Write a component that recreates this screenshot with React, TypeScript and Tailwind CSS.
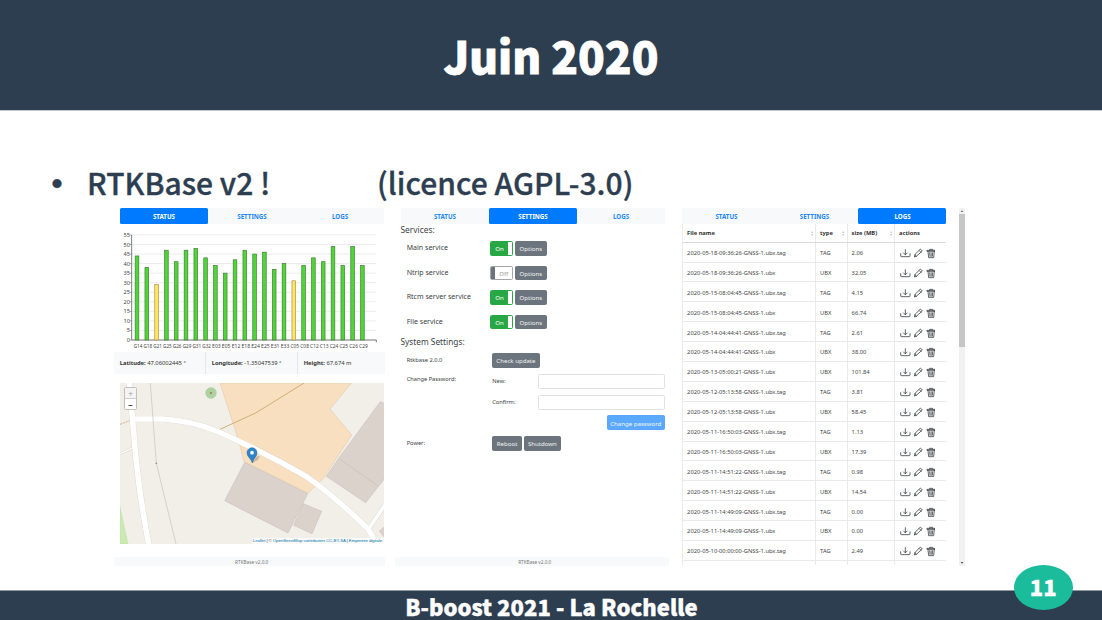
import React from 'react';

const slideFont = "font-['Noto_Sans_CJK_SC','Noto_Sans_CJK_JP',sans-serif]";

const tabs = ['STATUS', 'SETTINGS', 'LOGS'];

function Nav({ active }: { active: number }) {
  return (
    <nav className="flex h-[15.5px] w-[264px] shrink-0 bg-[#f8f9fa]">
      {tabs.map((t, i) => (
        <div
          key={t}
          className={
            'flex w-[88px] items-center justify-center rounded-[1.5px] pt-[1.5px] text-[6.2px] font-bold ' +
            (i === active ? 'bg-[#007bff] text-white' : 'text-[#1b86fb]')
          }
        >
          {t}
        </div>
      ))}
    </nav>
  );
}

const sats: [string, number][] = [
  ['G14', 44], ['G18', 38], ['G21', 29], ['G25', 47], ['G26', 41], ['G29', 47], ['G31', 48], ['G32', 43],
  ['E03', 39], ['E05', 35], ['E12', 42], ['E18', 47], ['E24', 45], ['E25', 46], ['E31', 37], ['E33', 40],
  ['C05', 31], ['C08', 39], ['C12', 43], ['C13', 41], ['C24', 49], ['C25', 39], ['C26', 49], ['C29', 39],
];

function Chart() {
  const y = (v: number) => 420 - v * 5.73;
  return (
    <svg viewBox="0 75 840 375" className="h-[125px] w-[280px] shrink-0">
      {Array.from({ length: 12 }, (_, i) => i * 5).map((v) => (
        <g key={v}>
          <line x1="65" x2="799" y1={y(v)} y2={y(v)} stroke="#e3e3e3" strokeWidth="2" />
          <line x1="59" x2="65" y1={y(v)} y2={y(v)} stroke="#777" strokeWidth="2" />
          <text x="60" y={y(v) + 6} fontSize="17" fill="#444" textAnchor="end">{v}</text>
        </g>
      ))}
      <path d="M65 105V420H799V427" fill="none" stroke="#666" strokeWidth="2.5" />
      {sats.map(([n, v], i) => {
        const x = 81 + i * 29.4;
        return (
          <g key={n}>
            <rect
              x={x - 5.5}
              y={y(v)}
              width="11"
              height={420 - y(v)}
              fill={v < 35 ? '#ffe562' : '#4fd636'}
              stroke={v < 35 ? '#a8924a' : '#3f7d38'}
              strokeWidth="2"
            />
            <text x={x + 3} y="444" fontSize="15" fill="#444" textAnchor="middle" textLength="26" lengthAdjust="spacingAndGlyphs">
              {n}
            </text>
          </g>
        );
      })}
    </svg>
  );
}

function Map() {
  return (
    <div className="relative h-[161px] w-[264px]">
      <svg viewBox="30 24 792 483" className="block h-full w-full">
        <rect x="30" y="24" width="792" height="483" fill="#f2efe9" />
        <path d="M330 24H724L660 102L725 180L640 310L594 355L402 260L384 190Z" fill="#f7dfc0" stroke="#e4cbb0" strokeWidth="2" />
        <path d="M30 395L54 507H30Z" fill="#c9ebb0" stroke="#b4d3a0" strokeWidth="1" />
        <path d="M30 236L70 217" stroke="#d8d5d0" strokeWidth="7" />
        <path d="M30 236L70 217" stroke="#fff" strokeWidth="4" />
        <path d="M30 148L62 136" stroke="#c9a46c" strokeWidth="2.5" strokeDasharray="6 3" />
        <path d="M330 163L437 114L582 24" fill="none" stroke="#d0ae76" strokeWidth="3" />
        <g fill="none" strokeLinejoin="round">
          <g stroke="#d9d4cc">
            <path d="M57 18L71 170Q82 330 117 512" strokeWidth="19" />
            <path d="M66 132H155Q250 138 325 170Q470 235 590 305Q670 360 775 463L802 512" strokeWidth="18" />
            <path d="M775 463L826 388" strokeWidth="13" />
          </g>
          <g stroke="#fff">
            <path d="M57 18L71 170Q82 330 117 512" strokeWidth="17" />
            <path d="M66 132H155Q250 138 325 170Q470 235 590 305Q670 360 775 463L802 512" strokeWidth="16.5" />
            <path d="M775 463L826 388" strokeWidth="11" />
          </g>
        </g>
        <path d="M121 24L139 265L198 507" fill="none" stroke="#c4c1bb" strokeWidth="2" />
        <circle cx="139" cy="265" r="2.5" fill="#888" />
        <g fill="#dbd2cc" stroke="#c5b9b1" strokeWidth="1.5">
          <path d="M404 262L593 356L534 474L344 377Z" />
          <path d="M580 386L635 409L606 476L551 451Z" />
          <path d="M811 80L824 86V310L767 383L649 304L686 250Z" />
          <path d="M686 250L804 333" fill="none" />
          <path d="M824 455L808 468L824 488Z" />
        </g>
        <circle cx="303" cy="54" r="17" fill="#add1a0" />
        <circle cx="303" cy="54" r="3" fill="#a5733a" />
        <path d="M428 263L440 245L450 243L443 255Z" fill="#6d6250" opacity=".35" />
        <path d="M427 264C423 250 411 245 411 233A15 15 0 0 1 441 233C441 245 431 250 427 264Z" fill="#2f83c7" stroke="#2769a5" strokeWidth="1.5" />
        <circle cx="426" cy="233" r="5.5" fill="#fff" />
      </svg>
      <div className="absolute left-[4px] top-[4px] h-[23.5px] w-[13px] rounded-[1.5px] border border-[#c2c0bb] bg-white text-center text-[8px] font-bold leading-[11px] text-[#333]">
        <div className="h-[11px] border-b border-[#ccc] bg-[#f4f4f4] text-[#bbb]">+</div>
        <div className="h-[11px]">−</div>
      </div>
      <div className="absolute bottom-0 right-0 h-[6px] whitespace-nowrap bg-white/70 pl-[1px] pr-[2px] font-['Liberation_Sans',sans-serif] text-[4.35px] leading-[6px] tracking-[-0.09px] text-[#0078a8]">
        Leaflet <span className="text-[#333]">| ©</span> OpenStreetMap contributors CC-BY-SA <span className="text-[#333]">|</span> Empreinte digitale
      </div>
    </div>
  );
}

function PanelFooter() {
  return (
    <div className="flex h-[9px] items-center justify-center bg-[#f8f9fa] pl-[5px] pt-[2px] text-[4.7px] leading-none text-[#777]">RTKBase v2.0.0</div>
  );
}

function Info({ label, value }: { label: string; value: string }) {
  return (
    <div className="flex w-[92px] items-center gap-[1.5px] whitespace-nowrap border-r border-[#e5e6e8] pl-[6px] pt-[1px] text-[5.8px] text-[#333] last:w-auto last:border-0">
      <b>{label}</b>
      <span>{value}</span>
    </div>
  );
}

function StatusPanel() {
  return (
    <section className="flex w-[271px] flex-col">
      <div className="pl-[6.3px]"><Nav active={0} /></div>
      <div className="-ml-[4px] mt-[1.3px] h-[127px]"><Chart /></div>
      <div className="flex h-[22px] shrink-0 bg-[#f8f9fa]">
        <Info label="Latitude:" value="47.06002445 °" />
        <Info label="Longitude:" value="-1.35047539 °" />
        <Info label="Height:" value="67.674 m" />
      </div>
      <div className="mt-[9px] pl-[6.3px]"><Map /></div>
      <div className="mt-auto"><PanelFooter /></div>
    </section>
  );
}

const buttonTones = {
  gray: 'border-[#6c757d] bg-[#6c757d]',
  blue: 'border-[#59a5fb] bg-[#5ba9ff]',
};

function Button({ children, tone = 'gray' }: { children: React.ReactNode; tone?: 'gray' | 'blue' }) {
  return (
    <div className={'flex h-[14.7px] items-center justify-center whitespace-nowrap rounded-[1.5px] border pt-[1px] text-[6.1px] text-[#f3f4f5] ' + buttonTones[tone]}>
      {children}
    </div>
  );
}

function Toggle({ on }: { on: boolean }) {
  return on ? (
    <div className="flex h-[14.7px] w-[23.6px] overflow-hidden rounded-[1.5px] border border-[#28a745] bg-white text-[6.1px] text-white">
      <div className="flex w-[17.6px] items-center justify-center bg-[#28a745] pt-[1px]">On</div>
    </div>
  ) : (
    <div className="flex h-[14.7px] w-[23.6px] overflow-hidden rounded-[1.5px] border border-[#a2a6aa] bg-white text-[6.1px] text-[#999]">
      <div className="w-[4.5px] bg-[#6c757d]" />
      <div className="flex flex-1 items-center justify-center pt-[1px]">Off</div>
    </div>
  );
}

const services: [string, boolean][] = [
  ['Main service', true], ['Ntrip service', false], ['Rtcm server service', true], ['File service', true],
];

function SettingsPanel() {
  return (
    <section className="flex w-[274.5px] flex-col text-[#3a3f44]">
      <div className="pl-[6px]"><Nav active={1} /></div>
      <h2 className="mt-[1px] h-[10px] pl-[5.500px] text-[8.4px] leading-[10px]">Services:</h2>
      <div className="mt-[6.5px]">
        {services.map(([name, on]) => (
          <div key={name} className="flex h-[24.5px] items-start pl-[11.700px]">
            <span className="w-[83px] text-[7.05px] leading-[13px]">{name}</span>
            <Toggle on={on} />
            <div className="ml-[1.8px] w-[31.7px]"><Button>Options</Button></div>
          </div>
        ))}
      </div>
      <h2 className="-mt-[3px] h-[12px] pl-[5.500px] text-[8.3px] leading-[12px]">System Settings:</h2>
      <div className="mt-[5.200px] flex h-[20.7px] pl-[11.700px] text-[5.7px]">
        <span className="w-[85.6px] leading-[15px]">Rtkbase 2.0.0</span>
        <div className="w-[47.3px]"><Button>Check update</Button></div>
      </div>
      <div className="flex h-[62px] pl-[11.700px] text-[5.7px]">
        <span className="w-[85.6px] leading-[11px]">Change Password:</span>
        <div className="flex w-[172.5px] flex-col">
          <div className="flex h-[21px]">
            <span className="w-[46px] leading-[15px]">New:</span>
            <div className="h-[14.7px] w-[126.5px] rounded-[1.5px] border border-[#dfe2e5] bg-white" />
          </div>
          <div className="flex h-[20.5px]">
            <span className="w-[46px] leading-[15px]">Confirm:</span>
            <div className="h-[14.7px] w-[126.5px] rounded-[1.5px] border border-[#dfe2e5] bg-white" />
          </div>
          <div className="w-[58px] self-end"><Button tone="blue">Change password</Button></div>
        </div>
      </div>
      <div className="flex pl-[11.700px] text-[5.7px]">
        <span className="w-[85.6px] leading-[15px]">Power:</span>
        <div className="w-[29.7px]"><Button>Reboot</Button></div>
        <div className="ml-[1.8px] w-[37.3px]"><Button>Shutdown</Button></div>
      </div>
      <div className="mt-auto"><PanelFooter /></div>
    </section>
  );
}

const files: [string, string][] = [
  ['18-09:36:26', '2.06'], ['18-09:36:26', '32.05'], ['15-08:04:45', '4.15'], ['15-08:04:45', '66.74'],
  ['14-04:44:41', '2.61'], ['14-04:44:41', '38.00'], ['13-05:00:21', '101.84'], ['12-05:13:58', '3.81'],
  ['12-05:13:58', '58.45'], ['11-16:50:03', '1.13'], ['11-16:50:03', '17.39'], ['11-14:51:22', '0.98'],
  ['11-14:51:22', '14.54'], ['11-14:49:09', '0.00'], ['11-14:49:09', '0.00'], ['10-00:00:00', '2.49'],
];
const kinds = ['TAG', 'UBX', 'TAG', 'UBX', 'TAG', 'UBX', 'UBX', 'TAG', 'UBX', 'TAG', 'UBX', 'TAG', 'UBX', 'TAG', 'UBX', 'TAG'];

function Actions() {
  return (
    <svg viewBox="0 0 106 32" className="ml-[1px] h-[10.67px] w-[35.33px]" fill="none" stroke="#33383c" strokeWidth="2.3" strokeLinecap="round" strokeLinejoin="round">
      <path d="M2 17V24Q2 26 4 26H28Q30 26 30 24V17M16 5V20M10.500 15L16 20.500L21.500 15" />
      <path d="M62 4L67 9L49 25L43 27L45 20ZM58 8L63 13M45 20L49 25" />
      <path d="M82 7H105V10H82ZM89 7V4H98V7M84 10L86 29H101L103 10M89 14L90 25M93.500 14V25M98 14L97 25" />
    </svg>
  );
}

function Sort() {
  return (
    <svg viewBox="0 0 6 12" className="h-[5px] w-[2.5px]" fill="#ccc"><path d="M3 0L6 5H0ZM3 12L6 7H0Z" /></svg>
  );
}

const row = 'grid grid-cols-[133px_31.5px_47.5px_52px] shrink-0';
const cell = 'flex items-center border-r border-[#e8eaec] pl-[4.6px] pt-[2.4px] whitespace-nowrap';

function LogsPanel() {
  return (
    <section className="flex w-[264px] flex-col overflow-hidden text-[5.77px] text-[#444]">
      <Nav active={2} />
      <div className={row + ' h-[19.2px] border-b border-l border-b-[#d9dcdf] border-l-[#eceef0] font-bold text-[#333]'}>
        <div className={cell + ' -ml-px justify-between pr-[2px]'}>File name<Sort /></div>
        <div className={cell + ' -ml-px justify-between pr-[2px]'}>type<Sort /></div>
        <div className={cell + ' -ml-px justify-between pr-[2px]'}>size (MB)<Sort /></div>
        <div className={cell + ' -ml-px'}>actions</div>
      </div>
      {files.map(([f, s], i) => (
        <div key={i} className={row + ' h-[19.9px] border-b border-l border-[#e8eaec]'}>
          <div className={cell + ' -ml-px'}>{'2020-05-' + f + '-GNSS-1.ubx' + (kinds[i] === 'TAG' ? '.tag' : '')}</div>
          <div className={cell + ' -ml-px'}>{kinds[i]}</div>
          <div className={cell + ' -ml-px'}>{s}</div>
          <div className={cell + ' -ml-px'}><Actions /></div>
        </div>
      ))}
      <div className={row + ' h-[4px] border-l border-[#e8eaec]'}>
        <div className={cell} /><div className={cell} /><div className={cell} /><div className={cell} />
      </div>
    </section>
  );
}

function Scrollbar() {
  return (
    <div className="ml-[12.5px] flex w-[6px] flex-col items-center justify-between bg-[#f1f1f1]">
      <svg viewBox="0 0 6 6" className="h-[6px] w-[6px] shrink-0"><path d="M1.500 4L3 2.300L4.500 4Z" fill="#777" /></svg>
      <div className="h-[133px] w-[5.5px] bg-[#c6c6c6]" />
      <div className="flex-1" />
      <svg viewBox="0 0 6 6" className="h-[6px] w-[6px] shrink-0"><path d="M1.500 2L3 3.700L4.500 2Z" fill="#555" /></svg>
    </div>
  );
}

export default function App() {
  return (
    <div className={'relative flex h-[620px] w-[1102px] flex-col overflow-hidden bg-white ' + slideFont}>
      <header className="flex h-[110.500px] shrink-0 items-center justify-center border-b border-[#c4c8cd] bg-[#2d3e50] pt-[1px] text-white">
        <h1 className="text-[44px] font-black leading-none [-webkit-text-stroke:0.8px_white]">Juin 2020</h1>
      </header>
      <main className="flex-1">
        <div className="flex h-[97.5px] items-end pl-[51px] text-[30px] font-medium text-[#2d3e50]">
          <div className="flex h-[53px] items-center leading-none [-webkit-text-stroke:0.35px_#2d3e50]">
            <span className="-ml-[13px] w-[49px] text-[38px]">•</span>
            <span className="w-[290px] whitespace-pre">RTKBase v2 !</span>
            <span className="tracking-[0.05px]">(licence AGPL-3.0)</span>
          </div>
        </div>
        <div className="flex h-[357.5px] pl-[113.700px] font-['Noto_Sans',sans-serif]">
          <StatusPanel />
          <div className="ml-[10.300px] flex"><SettingsPanel /></div>
          <div className="ml-[13px] flex"><LogsPanel /></div>
          <Scrollbar />
        </div>
      </main>
      <footer className="flex h-[30px] shrink-0 items-center justify-center border-t border-[#8d959e] bg-[#2d3e50] pl-[1px] text-[22px] font-black leading-none tracking-[0.03px] text-white [-webkit-text-stroke:0.4px_white]">
        B-boost 2021 - La Rochelle
      </footer>
      <div className="absolute left-[1013.500px] top-[565px] flex h-[45px] w-[59.500px] items-center justify-center rounded-[50%] bg-[#1abc9c] pb-[3px] text-[22px] font-black leading-none text-white [-webkit-text-stroke:0.4px_white]">
        11
      </div>
    </div>
  );
}
